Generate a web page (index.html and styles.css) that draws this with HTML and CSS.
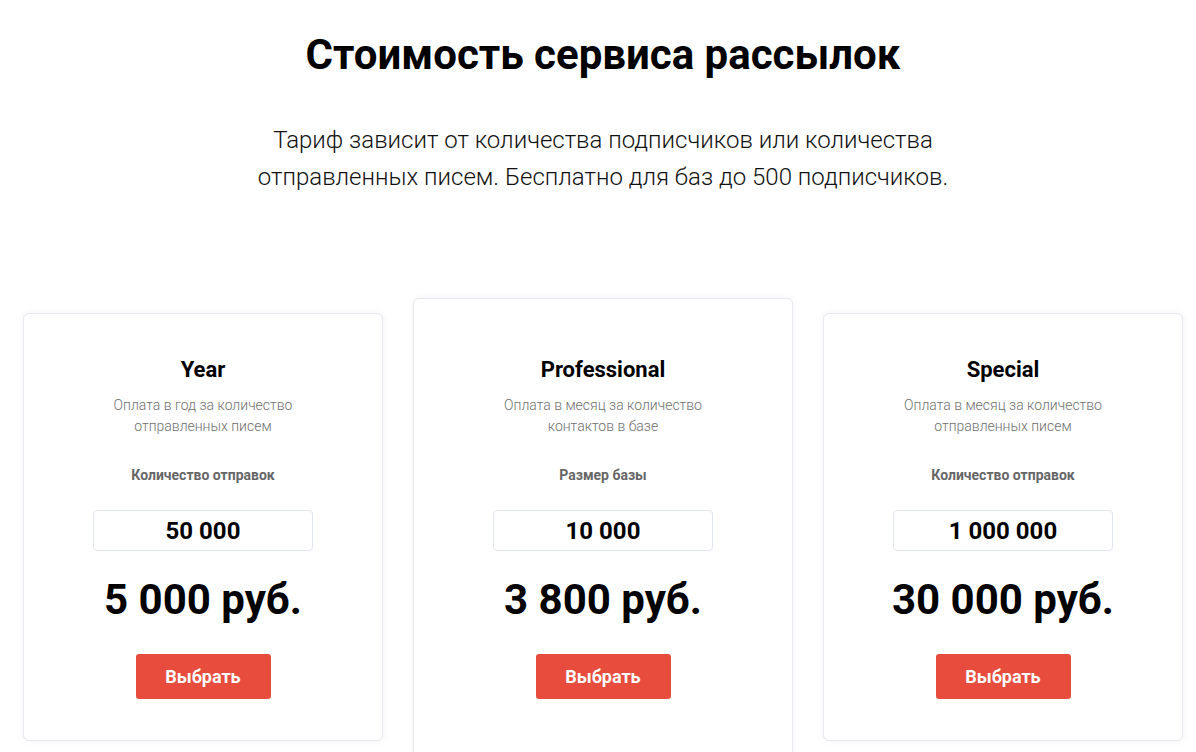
FILE: index.html
```html
<!DOCTYPE html>
<html lang="ru">
<head>
<meta charset="utf-8">
<title>Стоимость сервиса рассылок</title>
<link rel="stylesheet" href="styles.css">
</head>
<body>
<section class="pricing">
  <h1 class="title">Стоимость сервиса рассылок</h1>
  <p class="lead">Тариф зависит от количества подписчиков или количества<br>отправленных писем. Бесплатно для баз до 500 подписчиков.</p>
  <div class="cards">
    <div class="card">
      <h2 class="card-title">Year</h2>
      <p class="card-desc">Оплата в год за количество<br>отправленных писем</p>
      <div class="card-label">Количество отправок</div>
      <div class="card-input">50 000</div>
      <div class="card-price">5 000 руб.</div>
      <button class="card-btn">Выбрать</button>
    </div>
    <div class="card card-featured">
      <h2 class="card-title">Professional</h2>
      <p class="card-desc">Оплата в месяц за количество<br>контактов в базе</p>
      <div class="card-label">Размер базы</div>
      <div class="card-input">10 000</div>
      <div class="card-price">3 800 руб.</div>
      <button class="card-btn">Выбрать</button>
    </div>
    <div class="card">
      <h2 class="card-title">Special</h2>
      <p class="card-desc">Оплата в месяц за количество<br>отправленных писем</p>
      <div class="card-label">Количество отправок</div>
      <div class="card-input">1 000 000</div>
      <div class="card-price">30 000 руб.</div>
      <button class="card-btn">Выбрать</button>
    </div>
  </div>
</section>
</body>
</html>
```

FILE: styles.css
```css
* { box-sizing: border-box; }
html, body { margin: 0; padding: 0; background: #fff; }
body {
  font-family: Roboto, "Liberation Sans", Arial, sans-serif;
  color: #000;
  overflow: hidden;
  height: 752px;
}
.pricing {
  display: flex;
  flex-direction: column;
  align-items: center;
  padding-top: 30px;
  padding-left: 10px;
}
.title {
  margin: 0;
  font-size: 42px;
  font-weight: 700;
  line-height: 50px;
  color: #000;
}
.lead {
  margin: 42px 0 0;
  font-size: 24px;
  font-weight: 300;
  line-height: 37px;
  text-align: center;
  color: #111;
}
.cards {
  display: flex;
  align-items: flex-start;
  gap: 30px;
  align-self: flex-start;
  margin-left: 13px;
  margin-top: 102px;
}
.card {
  width: 360px;
  margin-top: 15px;
  background: #fff;
  border: 1px solid #e6e9ee;
  border-radius: 6px;
  box-shadow: 0 0 8px rgba(0, 0, 0, 0.05);
  display: flex;
  flex-direction: column;
  align-items: center;
  padding: 43px 20px 41px;
  text-align: center;
}
.card-featured {
  width: 380px;
  margin-top: 0;
  padding-top: 58px;
  padding-bottom: 80px;
}
.card-title {
  margin: 0;
  font-size: 22px;
  font-weight: 700;
  line-height: 26px;
}
.card-desc {
  margin: 12px 0 0;
  font-size: 14px;
  font-weight: 300;
  line-height: 21px;
  color: #6f6f6f;
}
.card-label {
  margin-top: 29px;
  font-size: 14px;
  font-weight: 700;
  line-height: 18px;
  color: #666;
}
.card-input {
  margin-top: 26px;
  width: 220px;
  height: 41px;
  border: 1px solid #e2e6ee;
  border-radius: 4px;
  font-size: 24px;
  font-weight: 700;
  line-height: 41px;
  color: #000;
}
.card-price {
  margin-top: 25px;
  font-size: 42px;
  font-weight: 700;
  line-height: 48px;
}
.card-btn {
  margin-top: 30px;
  width: 135px;
  height: 45px;
  border: 0;
  border-radius: 3px;
  background: #e74c3c;
  color: #fff;
  font-family: inherit;
  font-size: 18px;
  font-weight: 700;
  padding: 0;
}
```
